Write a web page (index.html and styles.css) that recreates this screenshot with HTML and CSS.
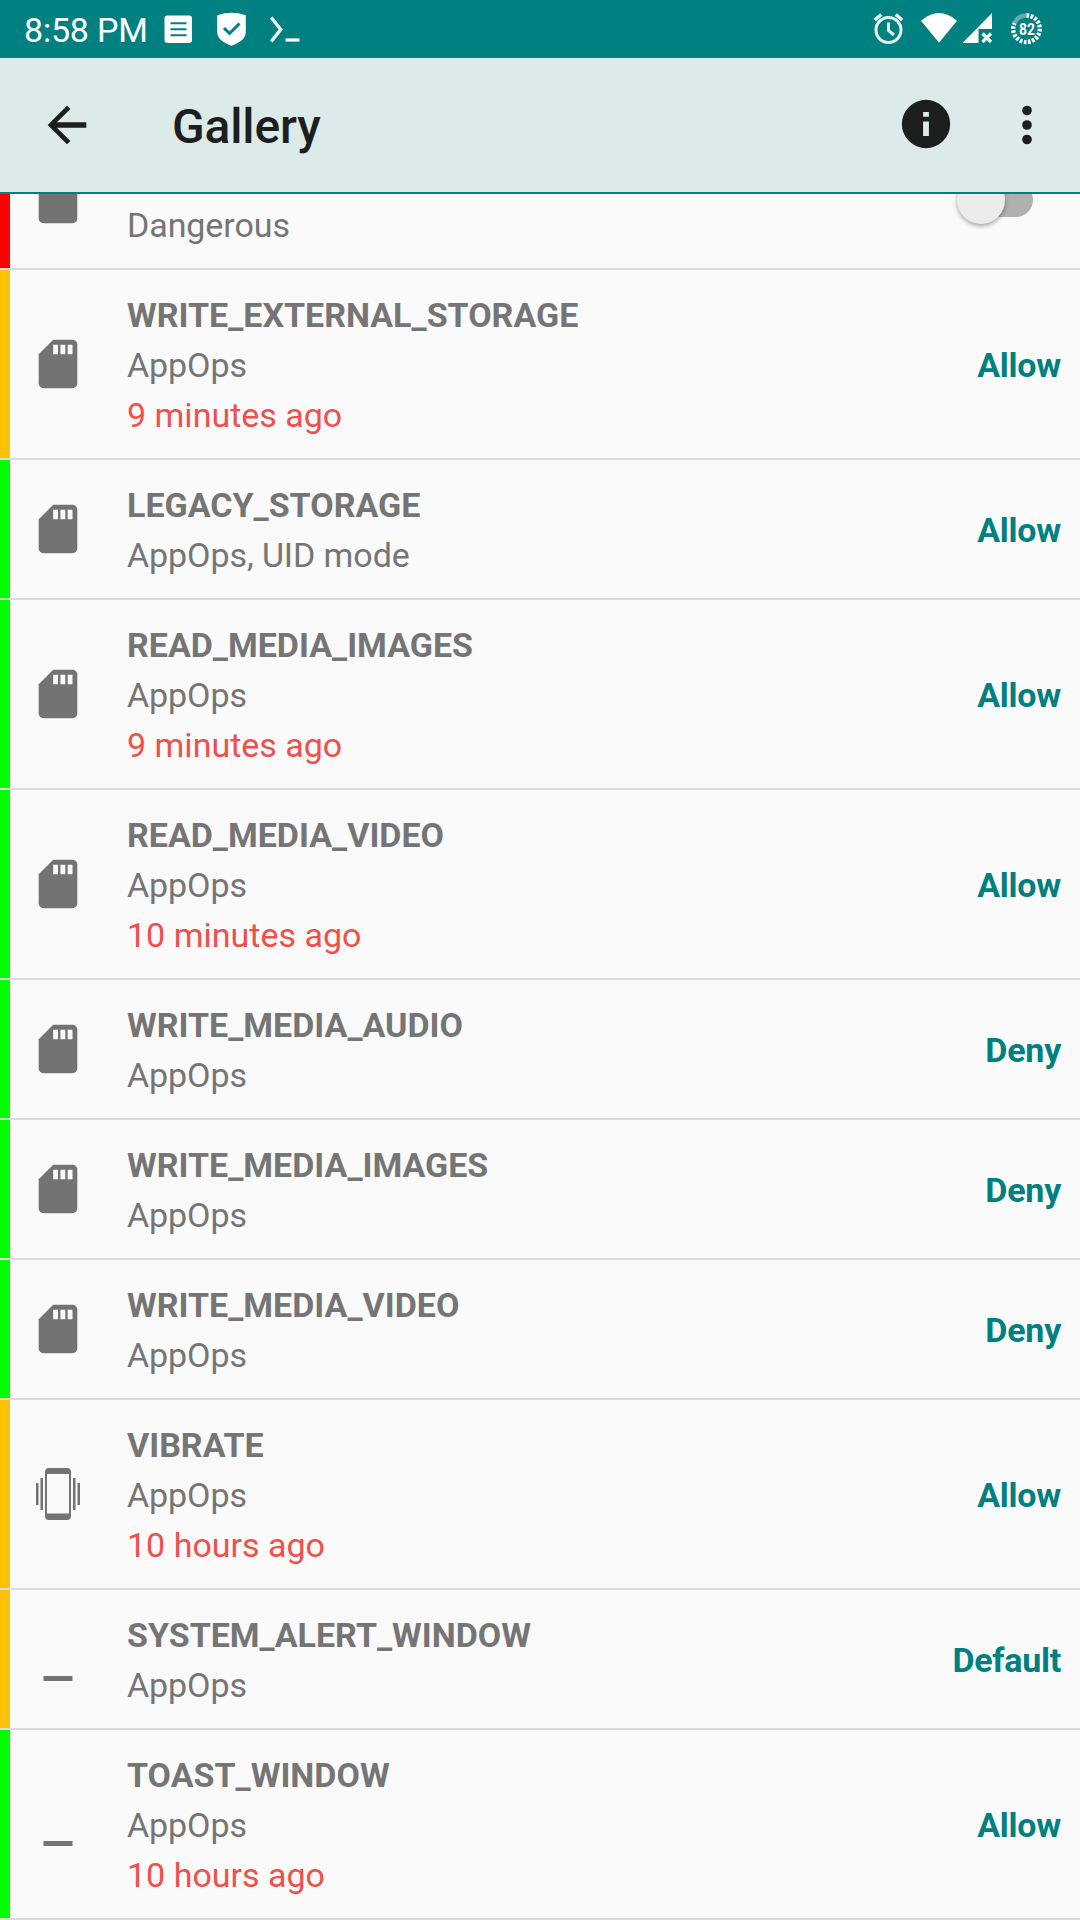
FILE: index.html
```html
<!DOCTYPE html>
<html lang="en">
<head>
<meta charset="utf-8">
<title>Gallery</title>
<link rel="stylesheet" href="styles.css">
</head>
<body>
<svg class="defs" aria-hidden="true">
  <symbol id="sd" viewBox="0 0 24 24"><path d="M18 2h-8L4.02 8 4 20c0 1.100.9 2 2 2h12c1.100 0 2-.9 2-2V4c0-1.100-.9-2-2-2z"/><path class="hole" d="M10 4h2v4h-2zM13 4h2v4h-2zM16 4h2v4h-2z"/></symbol>
  <symbol id="vibrate" viewBox="0 0 58 58"><path fill-rule="evenodd" d="M20 3h18a4 4 0 0 1 4 4v44a4 4 0 0 1-4 4H20a4 4 0 0 1-4-4V7a4 4 0 0 1 4-4zM18 9v39.500h22V9z"/><path d="M11.500 13h2.500v32h-2.500zM7 18h2.500v22H7zM44 13h2.500v32H44zM48.500 18H51v22h-2.500z"/></symbol>
  <symbol id="dash" viewBox="0 0 58 58"><path d="M14.500 46h29v5h-29z"/></symbol>
</svg>
<div class="screen">
  <header class="status">
    <span class="clock">8:58 PM</span>
    <svg class="status-left" width="140" height="58" viewBox="160 0 140 58">
      <rect x="164.500" y="15.500" width="27.500" height="27.500" rx="3" fill="#fff"/>
      <path d="M170.500 23.300h16M170.500 29.300h16M170.500 35.300h16" stroke="#008080" stroke-width="2"/>
      <path d="M217.200 15.200Q231.500 10.500 245.800 15.200V32Q245.500 41 231.500 45.700Q217.500 41 217.200 32Z" fill="#fff"/>
      <path d="M224 28l5.500 5.500 10-10" fill="none" stroke="#008080" stroke-width="3"/>
      <path d="M271.200 17.500l9.500 12-9.500 12" fill="none" stroke="#e8f4f4" stroke-width="3.500"/>
      <path d="M285.500 40h14" stroke="#fff" stroke-width="3.200"/>
    </svg>
    <svg class="status-right" width="180" height="58" viewBox="870 0 180 58">
      <g fill="none" stroke="#e8f5f5">
        <circle cx="888.500" cy="30" r="12.500" stroke-width="3"/>
        <path d="M888.500 22.500v8l5.500 4.500" stroke-width="3"/>
        <path d="M874.800 20l6.500-5.500M902.200 20l-6.500-5.500" stroke-width="3.500"/>
      </g>
      <path d="M939 42.800L921 20.700Q939 5.500 957 20.700Z" fill="#fff"/>
      <path d="M962.500 43L992 13V29H978.500V43Z" fill="#fff"/>
      <path d="M982.500 33.500l8.500 8.500M991 33.500l-8.500 8.500" stroke="#fff" stroke-width="3.200"/>
      <circle cx="1026.500" cy="28.800" r="13.300" fill="none" stroke="#5eaeae" stroke-width="4.400" pathLength="100" stroke-dasharray="18 82" stroke-dashoffset="-82" transform="rotate(-90 1026.500 28.800)"/>
      <circle cx="1026.500" cy="28.800" r="13.300" fill="none" stroke="#fff" stroke-width="4.400" pathLength="100" stroke-dasharray="3.200 1.800 3.200 1.800 3.200 1.800 3.200 1.800 3.200 1.800 3.200 1.800 3.200 1.800 3.200 1.800 3.200 1.800 3.200 1.800 3.200 1.800 3.200 1.800 3.200 1.800 3.200 1.800 3.200 1.800 3.200 1.800 2 100" transform="rotate(-90 1026.500 28.800)"/>
      <text x="1027" y="34.800" class="battery" textLength="16" lengthAdjust="spacingAndGlyphs">82</text>
    </svg>
  </header>
  <nav class="toolbar">
    <svg class="icon back" viewBox="0 0 24 24"><path d="M20 10.900H7.830l5.590-5.490L12 4l-8 8 8 8 1.410-1.410L7.830 13.100H20z"/></svg>
    <h1>Gallery</h1>
    <svg class="icon info" viewBox="0 0 24 24"><path fill-rule="evenodd" d="M12 2a10 10 0 1 0 0 20 10 10 0 0 0 0-20zm1.200 15h-2.400v-6h2.400zm0-8h-2.400V7h2.400z"/></svg>
    <svg class="icon more" viewBox="0 0 24 24"><circle cx="12" cy="6" r="2"/><circle cx="12" cy="12" r="2"/><circle cx="12" cy="18" r="2"/></svg>
  </nav>
  <main class="list">
    <section class="row red"><svg class="icon"><use href="#sd"/></svg><div class="text"><b>&nbsp;</b><span>Dangerous</span></div><div class="switch"><i></i></div></section>
    <section class="row amber"><svg class="icon"><use href="#sd"/></svg><div class="text"><b>WRITE_EXTERNAL_STORAGE</b><span>AppOps</span><em>9 minutes ago</em></div><strong>Allow</strong></section>
    <section class="row green"><svg class="icon"><use href="#sd"/></svg><div class="text"><b>LEGACY_STORAGE</b><span>AppOps, UID mode</span></div><strong>Allow</strong></section>
    <section class="row green"><svg class="icon"><use href="#sd"/></svg><div class="text"><b>READ_MEDIA_IMAGES</b><span>AppOps</span><em>9 minutes ago</em></div><strong>Allow</strong></section>
    <section class="row green"><svg class="icon"><use href="#sd"/></svg><div class="text"><b>READ_MEDIA_VIDEO</b><span>AppOps</span><em>10 minutes ago</em></div><strong>Allow</strong></section>
    <section class="row green"><svg class="icon"><use href="#sd"/></svg><div class="text"><b>WRITE_MEDIA_AUDIO</b><span>AppOps</span></div><strong>Deny</strong></section>
    <section class="row green"><svg class="icon"><use href="#sd"/></svg><div class="text"><b>WRITE_MEDIA_IMAGES</b><span>AppOps</span></div><strong>Deny</strong></section>
    <section class="row green"><svg class="icon"><use href="#sd"/></svg><div class="text"><b>WRITE_MEDIA_VIDEO</b><span>AppOps</span></div><strong>Deny</strong></section>
    <section class="row amber"><svg class="icon"><use href="#vibrate"/></svg><div class="text"><b>VIBRATE</b><span>AppOps</span><em>10 hours ago</em></div><strong>Allow</strong></section>
    <section class="row amber"><svg class="icon"><use href="#dash"/></svg><div class="text"><b>SYSTEM_ALERT_WINDOW</b><span>AppOps</span></div><strong>Default</strong></section>
    <section class="row green"><svg class="icon"><use href="#dash"/></svg><div class="text"><b>TOAST_WINDOW</b><span>AppOps</span><em>10 hours ago</em></div><strong>Allow</strong></section>
  </main>
</div>
</body>
</html>
```
FILE: styles.css
```css
* { box-sizing: border-box; }
body { margin: 0; font-family: Roboto, sans-serif; background: #fafafa; }
.defs { display: none; }
.screen { width: 1080px; height: 1920px; overflow: hidden; display: flex; flex-direction: column; }
.status { height: 58px; flex: none; display: flex; background: #008080; color: #fff; }
.clock { width: 160px; padding-left: 24px; font-size: 34px; line-height: 60px; letter-spacing: -0.2px; white-space: nowrap; }
.status-right { margin-left: auto; margin-right: 30px; }
.battery { font: bold 17px Roboto, sans-serif; fill: #fff; text-anchor: middle; }
.toolbar { height: 136px; flex: none; display: flex; align-items: center; padding: 0 24px 0 38px; background: #dceae9; border-bottom: 2px solid #008080; }
.icon { width: 58px; height: 58px; flex: none; }
.toolbar .icon { fill: #1d1f1f; }
h1 { margin: 0 auto 0 76px; font-size: 48px; font-weight: 500; line-height: 60px; letter-spacing: -0.15px; padding-top: 4px; color: #1d1f1f; }
.toolbar .info { margin: 0 43px 2px 0; }
.list { flex: 1; min-height: 0; overflow: hidden; }
.row { display: flex; align-items: center; padding-right: 19px; border-bottom: 2px solid #dcdcdc; }
.row:first-child { margin-top: -64px; }
.row::before { content: ""; width: 10px; align-self: stretch; background: var(--level); }
.red { --level: #ff0000; }
.amber { --level: #ffc107; }
.green { --level: #00ff00; }
.row .icon { margin: 0 40px 0 19px; fill: #737373; }
.hole { fill: #fafafa; }
.text { flex: 1; padding: 20px 0 18px; font-size: 34px; line-height: 50px; color: #757575; }
.text > * { display: block; font-style: normal; }
.text b { font-weight: 700; }
.text span { letter-spacing: -0.08px; }
.text em { color: #f0504c; }
.row strong { font-size: 34px; line-height: 50px; font-weight: 700; letter-spacing: -0.25px; color: #008080; padding-top: 2px; }
.switch { width: 68px; height: 34px; margin-right: 28px; margin-top: 1px; border-radius: 17px; background: #b0b0b0; display: flex; align-items: center; }
.switch i { width: 48px; height: 48px; margin-left: -8px; border-radius: 50%; background: #ececec; box-shadow: 0 2px 4px rgba(0,0,0,.35); }
```
